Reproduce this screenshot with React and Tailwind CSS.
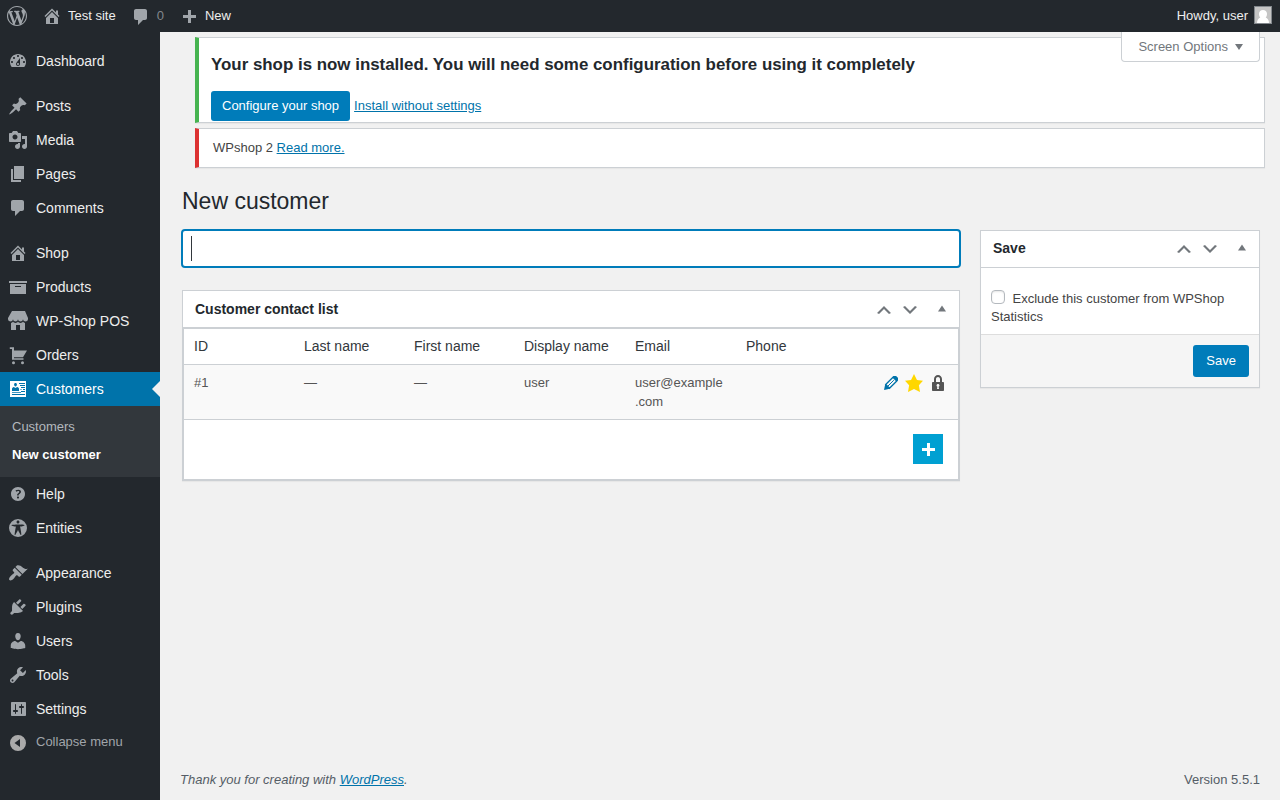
var ICONS = {
  wordpress: "M20 10c0-5.51-4.49-10-10-10C4.48 0 0 4.49 0 10c0 5.52 4.48 10 10 10 5.51 0 10-4.48 10-10zM7.78 15.37L4.37 6.22c.55-.02 1.17-.08 1.17-.08.5-.06.44-1.13-.06-1.11 0 0-1.45.11-2.37.11-.18 0-.37 0-.58-.01C4.12 2.69 6.87 1.11 10 1.11c2.33 0 4.45.87 6.05 2.34-.68-.11-1.65.39-1.65 1.58 0 .74.45 1.36.9 2.1.35.61.55 1.36.55 2.46 0 1.49-1.4 5-1.4 5l-3.03-8.37c.54-.02.82-.17.82-.17.5-.05.44-1.25-.06-1.22 0 0-1.44.12-2.38.12-.87 0-2.33-.12-2.33-.12-.5-.03-.56 1.2-.06 1.22l.92.08 1.26 3.41zM17.41 10c.24-.64.74-1.87.43-4.25.7 1.29 1.05 2.71 1.05 4.25 0 3.29-1.73 6.24-4.4 7.78.97-2.59 1.94-5.2 2.92-7.78zM6.1 18.09C3.12 16.65 1.11 13.53 1.11 10c0-1.3.23-2.48.72-3.59C3.25 10.3 4.67 14.2 6.1 18.09zm4.03-6.63l2.58 6.98c-.86.29-1.76.45-2.71.45-.79 0-1.57-.11-2.29-.33.81-2.38 1.62-4.74 2.42-7.1z",
  home: "M16 8.5l1.53 1.53-1.06 1.06L10 4.62l-6.47 6.47-1.06-1.06L10 2.5l4 4v-2h2v4zM10 6.04l6 6V18H4v-5.96zM12 17v-5H8v5h4z",
  dashboard: "M3.76 16h12.48c1.1-1.37 1.76-3.11 1.76-5 0-4.42-3.58-8-8-8s-8 3.58-8 8c0 1.89.66 3.63 1.76 5zM10 4c.55 0 1 .45 1 1s-.45 1-1 1-1-.45-1-1 .45-1 1-1zM6 6c.55 0 1 .45 1 1s-.45 1-1 1-1-.45-1-1 .45-1 1-1zm8 0c.55 0 1 .45 1 1s-.45 1-1 1-1-.45-1-1 .45-1 1-1zm-5.37 5.55L12 7v6c0 1.1-.9 2-2 2s-2-.9-2-2c0-.57.24-1.08.63-1.45zM4 10c.55 0 1 .45 1 1s-.45 1-1 1-1-.45-1-1 .45-1 1-1zm12 0c.55 0 1 .45 1 1s-.45 1-1 1-1-.45-1-1 .45-1 1-1zm-5 3c0-.55-.45-1-1-1s-1 .45-1 1 .45 1 1 1 1-.45 1-1z",
  post: "M10.44 3.02l1.82-1.82 6.36 6.35-1.83 1.82c-1.05-.68-2.48-.57-3.41.36l-.75.75c-.92.93-1.04 2.35-.35 3.41l-1.83 1.82-2.41-2.41-2.8 2.79c-.42.42-3.38 2.71-3.8 2.29s1.86-3.39 2.28-3.81l2.79-2.79L4.1 9.36l1.83-1.82c1.05.69 2.48.57 3.4-.36l.75-.75c.93-.92 1.05-2.35.36-3.41z",
  media: "M13 11V4c0-.55-.45-1-1-1h-1.67L9 1H5L3.67 3H2c-.55 0-1 .45-1 1v7c0 .55.45 1 1 1h10c.55 0 1-.45 1-1zM7 4.5c1.38 0 2.5 1.12 2.5 2.5S8.38 9.5 7 9.5 4.5 8.38 4.5 7 5.62 4.5 7 4.5zM14 6h5v10.5c0 1.38-1.12 2.5-2.5 2.5S14 17.88 14 16.5s1.12-2.5 2.5-2.5c.17 0 .34.02.5.05V9h-3V6zm-4 8.05V13h2v3.5c0 1.38-1.12 2.5-2.5 2.5S7 17.88 7 16.5 8.12 14 9.5 14c.17 0 .34.02.5.05z",
  page: "M6 15V2h10v13H6zm-1 1h8v2H3V5h2v11z",
  comments: "M5 2h9c1.1 0 2 .9 2 2v7c0 1.1-.9 2-2 2h-2l-5 5v-5H5c-1.1 0-2-.9-2-2V4c0-1.1.9-2 2-2z",
  archive: "M19 4v2H1V4h18zM2 7h16v10H2V7zm11 3V9H7v1h6z",
  store: "M1 10c.41.29.96.43 1.5.43.55 0 1.09-.14 1.5-.43.62-.46 1-1.17 1-2 0 .83.37 1.54 1 2 .41.29.96.43 1.5.43.55 0 1.09-.14 1.5-.43.62-.46 1-1.17 1-2 0 .83.37 1.54 1 2 .41.29.96.43 1.51.43.54 0 1.08-.14 1.49-.43.62-.46 1-1.17 1-2 0 .83.37 1.54 1 2 .41.29.96.43 1.5.43.55 0 1.09-.14 1.5-.43.63-.46 1-1.17 1-2V7l-3-7H4L0 7v1c0 .83.37 1.54 1 2zm2 8.99h5v-5h4v5h5v-7c-.37-.05-.72-.22-1-.43-.63-.45-1-.73-1-1.56 0 .83-.38 1.11-1 1.56-.41.3-.95.43-1.49.44-.55 0-1.1-.14-1.51-.44-.63-.45-1-.73-1-1.56 0 .83-.38 1.11-1 1.56-.41.3-.95.43-1.5.44-.54 0-1.09-.14-1.5-.44-.63-.45-1-.73-1-1.57 0 .84-.38 1.12-1 1.57-.29.21-.63.38-1 .44v6.99z",
  cart: "M1.8 2.3H6V5.5h13l-4 6.8H6v.9h9.500v1.600H4V4H1.800zM5.500 16.200a1.500 1.500 0 1 1 0 3 1.500 1.500 0 1 1 0-3zM14.500 16.200a1.500 1.500 0 1 1 0 3 1.500 1.500 0 1 1 0-3z",
  idcard: "M18 18V2H2v16h16zM7.5 4c.9 0 1.400.7 1.400 1.600S8.300 7.400 7.500 7.400 6.100 6.500 6.100 5.600 6.600 4 7.500 4zM11 4h6v1h-6zM12 6h5v1h-5zM13 8h4v1h-4zM4 12V9.800c0-1 .8-1.600 1.800-1.900L7.500 9l1.700-1.100c1 .3 1.800.9 1.800 1.900V12zM12.500 10h1v1h-1zM15 10h2v1h-2zM13 12h4v1h-4zM4 13.200h9v.9H4zM4 15h13v1H4z",
  help: "M17 10c0-3.87-3.14-7-7-7-3.87 0-7 3.13-7 7s3.13 7 7 7c3.86 0 7-3.13 7-7zm-6.3 1.48H9.14v-.43c0-.38.08-.7.24-.98s.46-.57.88-.89c.41-.29.68-.53.81-.71.14-.18.2-.39.2-.62 0-.25-.09-.44-.28-.58-.19-.13-.45-.19-.79-.19-.58 0-1.25.19-2 .57l-.64-1.28c.87-.49 1.8-.74 2.77-.74.81 0 1.45.2 1.92.58.48.39.71.91.71 1.55 0 .43-.09.8-.29 1.11-.19.32-.57.67-1.11 1.06-.38.28-.61.49-.71.63-.1.15-.15.34-.15.57v.35zm-1.47 2.74c-.18-.17-.27-.42-.27-.73 0-.33.08-.58.26-.75s.43-.25.77-.25c.32 0 .57.09.75.26s.27.42.27.74c0 .3-.09.55-.27.72-.18.18-.43.27-.75.27-.33 0-.58-.09-.76-.26z",
  access: "M19 10a9 9 0 1 0-18 0 9 9 0 1 0 18 0zM10 2.6c.83 0 1.5.67 1.5 1.5s-.67 1.51-1.5 1.51c-.82 0-1.5-.68-1.5-1.51s.68-1.5 1.5-1.5zM3.4 7.36c0-.65 6.6-.76 6.6-.76s6.6.11 6.6.76-4.47 1.4-4.47 1.4 1.69 8.14 1.06 8.38c-.62.24-3.19-5.19-3.19-5.19s-2.56 5.43-3.18 5.19c-.63-.24 1.06-8.38 1.06-8.38S3.4 8.01 3.4 7.36z",
  appearance: "M14.48 11.06L7.41 3.99l1.5-1.5c.5-.56 2.3-.47 3.51.32 1.21.8 1.43 1.28 2.91 2.1 1.18.64 2.45 1.26 4.45.85zm-.71.71L6.7 4.7 4.93 6.47c-.39.39-.39 1.02 0 1.41l1.06 1.06c.39.39.39 1.03 0 1.42-.6.6-1.43 1.11-2.21 1.69-.35.26-.7.53-1.01.84C1.43 14.23.4 16.08 1.4 17.07c.99 1 2.84-.03 4.18-1.36.31-.31.58-.66.85-1.02.57-.78 1.08-1.61 1.69-2.21.39-.39 1.02-.39 1.41 0l1.06 1.06c.39.39 1.02.39 1.41 0z",
  plugins: "M13.11 4.36L9.87 7.6 8 5.73l3.24-3.24c.35-.34 1.05-.2 1.56.32.52.51.66 1.21.31 1.55zm-8 1.77l.91-1.12 9.01 9.01-1.19.84c-.71.71-2.63 1.16-3.82 1.16H6.14L4.9 17.26c-.59.59-1.54.59-2.12 0-.59-.58-.59-1.53 0-2.12l1.24-1.24v-3.88c0-1.13.4-3.19 1.09-3.89zm7.26 3.97l3.24-3.24c.34-.35 1.04-.21 1.55.31.52.51.66 1.21.31 1.55l-3.24 3.25z",
  users: "M10 9.25c-2.27 0-2.73-3.44-2.73-3.44C7 4.02 7.82 2 9.97 2c2.16 0 2.98 2.02 2.71 3.81 0 0-.41 3.44-2.68 3.44zm0 2.57L12.72 10c2.39 0 4.52 2.33 4.52 4.53v2.49s-3.65 1.13-7.24 1.13c-3.65 0-7.24-1.13-7.24-1.13v-2.49c0-2.25 1.94-4.48 4.47-4.48z",
  tools: "M16.68 9.77c-1.34 1.34-3.3 1.67-4.95.99l-5.41 6.52c-.99.99-2.59.99-3.58 0s-.99-2.59 0-3.57l6.52-5.42c-.68-1.65-.35-3.61.99-4.95 1.28-1.28 3.12-1.62 4.72-1.06l-2.89 2.89 2.82 2.82 2.86-2.87c.53 1.58.18 3.39-1.08 4.65zM3.81 16.21c.4.39 1.04.39 1.43 0 .4-.4.4-1.04 0-1.43-.39-.4-1.03-.4-1.43 0-.39.39-.39 1.03 0 1.43z",
  settings: "M18 16V4c0-.55-.45-1-1-1H4c-.55 0-1 .45-1 1v12c0 .55.45 1 1 1h13c.55 0 1-.45 1-1zM8 11h1c.55 0 1 .45 1 1s-.45 1-1 1H8v1.5c0 .28-.22.5-.5.5s-.5-.22-.5-.5V13H6c-.55 0-1-.45-1-1s.45-1 1-1h1V5.5c0-.28.22-.5.5-.5s.5.22.5.5V11zm6-2h-1v0h-1c-.55 0-1-.45-1-1s.45-1 1-1h1V5.5c0-.28.22-.5.5-.5s.5.22.5.5V7h1c.55 0 1 .45 1 1s-.45 1-1 1h-1v5.5c0 .28-.22.5-.5.5s-.5-.22-.5-.5V9z",
  collapse: "M18 10a8 8 0 1 0-16 0 8 8 0 1 0 16 0zM12 6v8l-5.5-4z",
  plus: "M17 9v3h-5v5H9v-5H4V9h5V4h3v5h5z",
  up: "M15 14l-5-5-5 5-2-1 7-7 7 7z",
  down: "M5 6l5 5 5-5 2 1-7 7-7-7z",
  triangleUp: "M6 12.500h8l-4-6z",
  triangleDown: "M6 7h8l-4 6z",
  star: "M10 1l3 6 6 .75-4.12 4.62L16 19l-6-3-6 3 1.13-6.63L1 7.75 7 7z",
  lock: "M14 9h1c.55 0 1 .45 1 1v7c0 .55-.45 1-1 1H5c-.55 0-1-.45-1-1v-7c0-.55.45-1 1-1h1V6c0-2.21 1.79-4 4-4s4 1.79 4 4v3zm-2 0V6c0-1.1-.9-2-2-2s-2 .9-2 2v3h4zm-1 7l-.36-2.15c.51-.24.86-.75.86-1.35 0-.83-.67-1.5-1.5-1.5s-1.5.67-1.5 1.5c0 .6.35 1.11.86 1.35L9 16h2z"
};

var MENU = [
  { label: "Dashboard", icon: "dashboard" },
  { label: "Posts", icon: "post", gap: true },
  { label: "Media", icon: "media" },
  { label: "Pages", icon: "page" },
  { label: "Comments", icon: "comments" },
  { label: "Shop", icon: "home", gap: true },
  { label: "Products", icon: "archive" },
  { label: "WP-Shop POS", icon: "store" },
  { label: "Orders", icon: "cart" },
  { label: "Customers", icon: "idcard", children: ["Customers", "New customer"] },
  { label: "Help", icon: "help" },
  { label: "Entities", icon: "access" },
  { label: "Appearance", icon: "appearance", gap: true },
  { label: "Plugins", icon: "plugins" },
  { label: "Users", icon: "users" },
  { label: "Tools", icon: "tools" },
  { label: "Settings", icon: "settings" }
];

function Icon({ name, className = "" }) {
  return (
    <svg viewBox="0 0 20 20" className={"w-5 h-5 shrink-0 fill-current " + className} aria-hidden="true">
      <path fillRule="evenodd" d={ICONS[name]} />
    </svg>
  );
}

function PencilIcon({ className }) {
  return (
    <svg viewBox="0 0 14 14" className={"w-3.5 h-3.5 shrink-0 " + className} aria-hidden="true">
      <path d="M1.700 8.500L9 1.200c1-1 2.200-.9 3 0l.8.8c.9.800 1 2 0 3L5.500 12.300z" fill="none" stroke="currentColor" strokeWidth="1.300" />
      <path d="M1.200 8.300L5.700 12.800 0 14zM8.300 1.500L10 0h2l2 2v2l-1.500 1.700z" fill="currentColor" />
      <path d="M4 10l5.800-5.800" stroke="currentColor" strokeWidth="1" />
    </svg>
  );
}

function AdminBar() {
  return (
    <header className="h-8 shrink-0 bg-[#23282d] text-[#eee] flex items-center pl-[7px] pr-2">
      <Icon name="wordpress" className="text-[#a0a5aa]" />
      <a href="#" className="flex items-center ml-[15px]">
        <Icon name="home" className="text-[#a0a5aa] mr-1.5" />
        Test site
      </a>
      <a href="#" className="flex items-center ml-[15px]">
        <Icon name="comments" className="text-[#a0a5aa] mr-1.5 translate-y-px" />
        <span className="text-[#82878c]">0</span>
      </a>
      <a href="#" className="flex items-center ml-[15px]">
        <Icon name="plus" className="text-[#a0a5aa] mr-1.5" />
        New
      </a>
      <a href="#" className="flex items-center ml-auto gap-1.5">
        Howdy, user
        <svg viewBox="0 0 18 18" className="w-[18px] h-[18px] -translate-y-px">
          <rect width="18" height="18" fill="#82878c" />
          <rect x="1" y="1" width="16" height="16" fill="#c5c5c5" />
          <path d="M3 17c0-3 1.500-4.800 3.300-5.500C5.300 10.500 5 9.200 5 7.800 5 5.500 6.800 4 9 4s4 1.500 4 3.800c0 1.400-.3 2.700-1.300 3.700C13.500 12.200 15 14 15 17z" fill="#fff" />
        </svg>
      </a>
    </header>
  );
}

function MenuItem({ item }) {
  var active = Boolean(item.children);
  return (
    <li className={item.gap ? "mt-[11px]" : ""}>
      <a href="#" className={"relative flex items-center h-[34px] pl-2 text-sm " + (active ? "bg-[#0073aa] text-white" : "text-[#eee]")}>
        <Icon name={item.icon} className={"mr-2 " + (active ? "text-white" : "text-[#a0a5aa]")} />
        {item.label}
        {active && <span className="absolute right-0 top-[9px] border-8 border-transparent border-r-[#f1f1f1]"></span>}
      </a>
      {active && (
        <ul className="bg-[#32373c] pt-[7px] pb-2 text-[13px]">
          {item.children.map(function(child) {
            return (
              <li key={child} className={"h-7 px-3 leading-7 " + (child === "New customer" ? "font-semibold text-white" : "text-[#b4b9be]")}>{child}</li>
            );
          })}
        </ul>
      )}
    </li>
  );
}

function Sidebar() {
  return (
    <nav className="w-40 shrink-0 bg-[#23282d] pt-3">
      <ul>
        {MENU.map(function(item) {
          return <MenuItem key={item.label} item={item} />;
        })}
        <li className="flex items-center h-[34px] pl-2">
          <Icon name="collapse" className="mr-2 text-[#aaa]" />
          <span className="-mt-0.5 text-[#a0a5aa]">Collapse menu</span>
        </li>
      </ul>
    </nav>
  );
}

function BoxHeader({ title, className = "" }) {
  return (
    <div className={"flex items-center h-[37px] pl-3 pr-[7px] border-b border-[#ccd0d4] " + className}>
      <h2 className="text-sm font-semibold text-[#23282d]">{title}</h2>
      <div className="flex items-center ml-auto text-[#72777c]">
        <Icon name="up" className="mt-0.5 mr-1.5" />
        <Icon name="down" className="mt-0.5 mr-3" />
        <Icon name="triangleUp" />
      </div>
    </div>
  );
}

function ContactList() {
  return (
    <section className="mt-[22px] ml-0.5 bg-white border border-[#ccd0d4] shadow-[0_1px_1px_rgba(0,0,0,0.04)]">
      <BoxHeader title="Customer contact list" />
      <div className="border border-[#ccd0d4]">
        <div className="grid grid-cols-[110px_110px_110px_111px_111px_1fr] h-9 items-center pl-2.5 pb-0.5 text-sm text-[#32373c] border-b border-[#ccd0d4]">
          <span>ID</span>
          <span>Last name</span>
          <span>First name</span>
          <span>Display name</span>
          <span>Email</span>
          <span>Phone</span>
        </div>
        <div className="grid grid-cols-[110px_110px_110px_111px_111px_1fr] h-[55px] pl-2.5 pt-2 leading-[19px] text-[#555] bg-[#f9f9f9] border-b border-[#ccd0d4]">
          <span>#1</span>
          <span>—</span>
          <span>—</span>
          <span>user</span>
          <span>user@example<br />.com</span>
          <div className="flex justify-end items-start pr-2.5">
            <PencilIcon className="mt-[3px] mr-1.5 text-[#0073aa]" />
            <Icon name="star" className="mr-1 text-[#ffd700]" />
            <Icon name="lock" />
          </div>
        </div>
        <div className="flex justify-end h-[59px] pt-3.5 pr-[15px]">
          <button type="button" className="w-[30px] h-[30px] flex items-center justify-center bg-[#00a0d2] text-white">
            <Icon name="plus" />
          </button>
        </div>
      </div>
    </section>
  );
}

function SaveBox() {
  return (
    <aside className="w-[280px] h-[158px] shrink-0 mt-px bg-white border border-[#ccd0d4] shadow-[0_1px_1px_rgba(0,0,0,0.04)]">
      <BoxHeader title="Save" className="pb-0.5" />
      <label className="block h-[66px] pt-[22px] px-2.5 leading-[18px] text-[#444]">
        <span className="inline-block w-3.5 h-3.5 mr-[7.5px] rounded border border-[#b4b9be] bg-white shadow-[inset_0_1px_2px_rgba(0,0,0,0.1)] align-[-1px]"></span>
        Exclude this customer from WPShop Statistics
      </label>
      <div className="flex justify-end h-[53px] pt-2.5 pr-2.5 bg-[#f5f5f5] border-t border-[#ddd]">
        <button type="button" className="h-8 px-[13px] rounded-[3px] bg-[#007cba] text-white">Save</button>
      </div>
    </aside>
  );
}

function App() {
  return (
    <div className="h-screen flex flex-col overflow-hidden bg-[#f1f1f1] text-[13px] text-[#444] font-['Liberation_Sans',Arial,sans-serif]">
      <AdminBar />
      <div className="flex flex-1 min-h-0">
        <Sidebar />
        <main className="relative flex-1 flex flex-col pl-5 pr-5">
          <div className="absolute right-5 top-0 flex items-center h-[30px] pl-4 pr-2.5 bg-white border border-t-0 border-[#ccd0d4] rounded-b text-[#72777c]">
            Screen Options
            <Icon name="triangleDown" className="ml-px" />
          </div>

          <div className="mt-[5px] ml-[15px] -mr-[5px] h-[86px] pl-3 bg-white border border-l-4 border-[#ccd0d4] border-l-[#46b450] shadow-[0_1px_1px_rgba(0,0,0,0.04)]">
            <h2 className="pt-[15px] text-[16.9px] leading-6 font-semibold text-[#23282d]">Your shop is now installed. You will need some configuration before using it completely</h2>
            <div className="flex items-center gap-1 mt-3.5">
              <button type="button" className="h-[30px] px-[11px] rounded-[3px] bg-[#007cba] text-white">Configure your shop</button>
              <a href="#" className="text-[#0073aa] underline">Install without settings</a>
            </div>
          </div>
          <div className="mt-[5px] ml-[15px] -mr-[5px] h-10 pl-3.5 leading-[38px] bg-white border border-l-4 border-[#ccd0d4] border-l-[#dc3232] shadow-[0_1px_1px_rgba(0,0,0,0.04)]">
            WPshop 2 <a href="#" className="text-[#0073aa] underline">Read more.</a>
          </div>

          <h1 className="mt-[18px] ml-0.5 text-[23px] leading-[30px] text-[#23282d]">New customer</h1>

          <div className="flex items-start mt-[13px] gap-5">
            <div className="flex-1">
              <div className="ml-px -mr-px h-[39px] p-[5px] pl-2 flex items-start bg-white border-2 border-[#007cba] rounded">
                <span className="w-px h-[25px] bg-[#32373c]"></span>
              </div>
              <ContactList />
            </div>
            <SaveBox />
          </div>

          <footer className="flex justify-between mt-auto mb-[11px] leading-[18px] text-[#555d66]">
            <p className="italic">Thank you for creating with <a href="#" className="text-[#0073aa] underline">WordPress</a>.</p>
            <p>Version 5.5.1</p>
          </footer>
        </main>
      </div>
    </div>
  );
}

export default App;
